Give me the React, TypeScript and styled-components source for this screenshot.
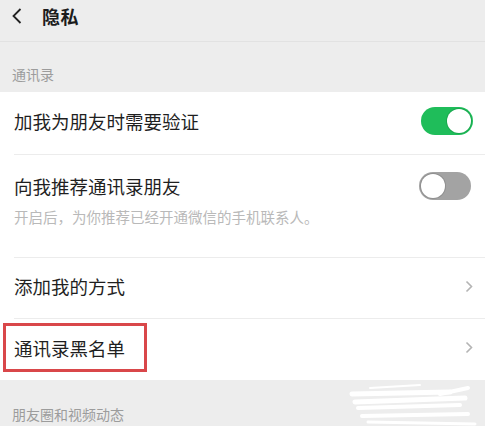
import React from 'react'
import styled, { createGlobalStyle } from 'styled-components'

const GlobalStyle = createGlobalStyle`
  html, body {
    margin: 0;
    padding: 0;
    background: #ededed;
    font-family: "Noto Sans CJK SC", "Noto Sans", sans-serif;
  }
`

const Page = styled.div`
  width: 485px;
  height: 426px;
  overflow: hidden;
  background: #ededed;
  position: relative;
`

const Header = styled.header`
  height: 42px;
  display: flex;
  align-items: center;
  padding: 0 12px 9px;
  box-sizing: border-box;
  border-bottom: 1px solid #e2e2e2;

  .back {
    width: 10px;
    height: 16px;
    margin-right: 20px;
    display: flex;
  }

  .title {
    margin: 0;
    font-size: 18px;
    font-weight: 700;
    color: #1c1c1c;
    letter-spacing: 0.5px;
  }
`

const SectionLabel = styled.div<{ $height: number; $bottom: number }>`
  height: ${({ $height }) => $height}px;
  display: flex;
  align-items: flex-end;
  padding: 0 12px ${({ $bottom }) => $bottom}px;
  box-sizing: border-box;
  font-size: 14px;
  line-height: 20px;
  color: #9c9c9c;
`

const List = styled.div`
  background: #fff;
`

const Row = styled.div<{ $height: number; $divider?: boolean; $top?: number }>`
  height: ${({ $height }) => $height}px;
  margin-left: 14px;
  padding: ${({ $top }) => ($top ? `${$top}px 14px 0 0` : '0 12px 4px 0')};
  box-sizing: border-box;
  display: flex;
  flex-direction: column;
  justify-content: ${({ $top }) => ($top ? 'flex-start' : 'center')};
  border-bottom: ${({ $divider }) => ($divider ? '1px solid #ececec' : 'none')};
`

const RowMain = styled.div`
  display: flex;
  align-items: center;
  justify-content: space-between;
`

const RowTitle = styled.span<{ $boxed?: boolean }>`
  font-size: 18.5px;
  color: #1f1f1f;
  line-height: 26px;
  position: relative;

  ${({ $boxed }) => $boxed && `
    &::after {
      content: '';
      position: absolute;
      left: -11px;
      right: -22px;
      top: -12px;
      bottom: -11px;
      border: 3px solid #d9474a;
    }
  `}
`

const Desc = styled.p`
  margin: 7px 0 0;
  font-size: 14.5px;
  color: #b9b9b9;
  line-height: 20px;
`

const Switch = styled.div<{ $on: boolean }>`
  width: 52px;
  height: 28px;
  border-radius: 14px;
  background: ${({ $on }) => ($on ? '#1fbd5a' : '#a3a3a3')};
  display: flex;
  align-items: center;
  justify-content: ${({ $on }) => ($on ? 'flex-end' : 'flex-start')};
  padding: 0 2px;
  box-sizing: border-box;

  &::before {
    content: '';
    width: 24px;
    height: 24px;
    border-radius: 50%;
    background: #fff;
    box-shadow: 0 0 0 1px ${({ $on }) => ($on ? '#19a84e' : '#8f8f8f')};
  }
`

const Chevron = () => (
  <svg width="8" height="13" viewBox="0 0 8 13">
    <path d="M1.5 1.5 L6.5 6.5 L1.5 11.5" fill="none" stroke="#b4b4b4" strokeWidth="1.6" />
  </svg>
)

const Scribble = styled.svg`
  position: absolute;
  left: 340px;
  top: 380px;
`

const App = () => (
  <Page>
    <GlobalStyle />
    <Header>
      <svg className="back" viewBox="0 0 10 16">
        <path d="M8.5 1 L1.5 8 L8.5 15" fill="none" stroke="#222" strokeWidth="1.8" />
      </svg>
      <p className="title">隐私</p>
    </Header>
    <SectionLabel $height={50} $bottom={8}>通讯录</SectionLabel>
    <List>
      <Row $height={63} $divider>
        <RowMain>
          <RowTitle>加我为朋友时需要验证</RowTitle>
          <Switch $on />
        </RowMain>
      </Row>
      <Row $height={103} $divider $top={17}>
        <RowMain>
          <RowTitle>向我推荐通讯录朋友</RowTitle>
          <Switch $on={false} />
        </RowMain>
        <Desc>开启后，为你推荐已经开通微信的手机联系人。</Desc>
      </Row>
      <Row $height={61} $divider>
        <RowMain>
          <RowTitle>添加我的方式</RowTitle>
          <Chevron />
        </RowMain>
      </Row>
      <Row $height={61}>
        <RowMain>
          <RowTitle $boxed>通讯录黑名单</RowTitle>
          <Chevron />
        </RowMain>
      </Row>
    </List>
    <SectionLabel $height={46} $bottom={2}>朋友圈和视频动态</SectionLabel>
    <Scribble width="145" height="46" viewBox="0 0 145 46">
      <g fill="none" stroke="#fff" strokeLinecap="round">
        <path d="M12 14 L110 12" strokeWidth="5" />
        <path d="M30 8 L80 5" strokeWidth="2" />
        <path d="M15 22 L125 18" strokeWidth="5" />
        <path d="M18 28 L120 25" strokeWidth="4" />
        <path d="M100 14 L128 8" strokeWidth="4" />
        <path d="M22 36 L128 34" strokeWidth="4" />
        <path d="M28 42 L135 44" strokeWidth="3" />
      </g>
    </Scribble>
  </Page>
)

export default App
